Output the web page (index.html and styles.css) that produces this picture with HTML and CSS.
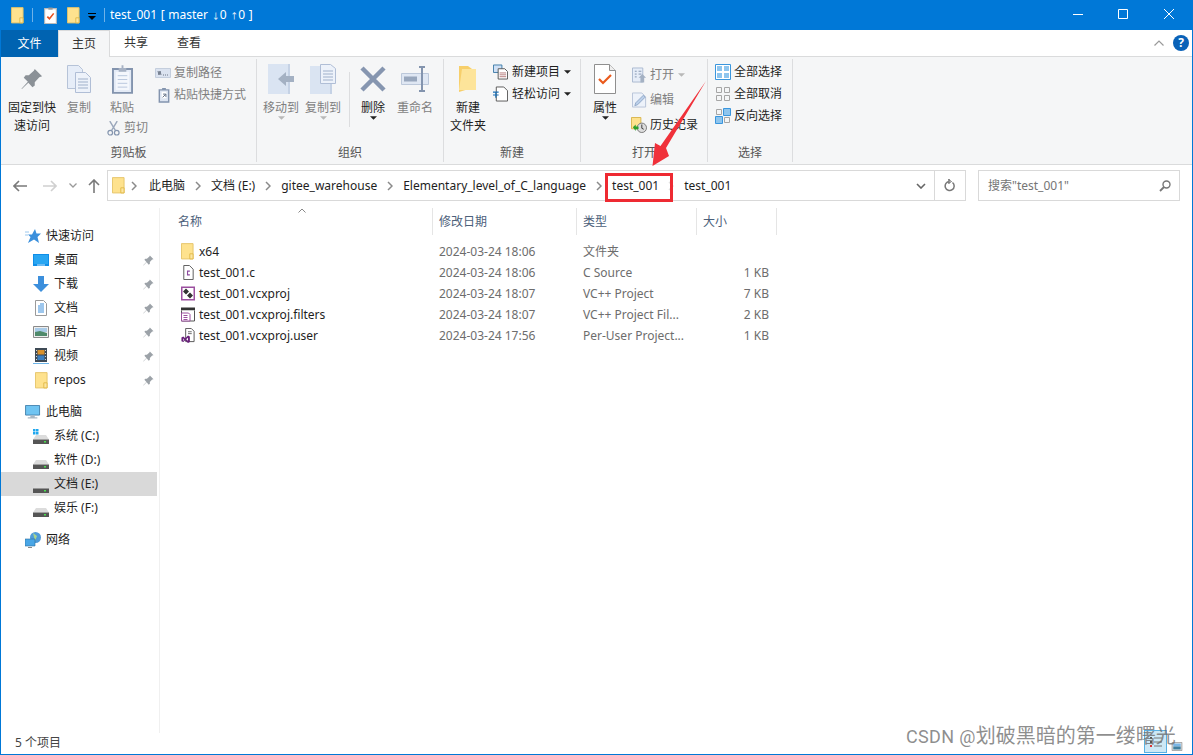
FILE: index.html
```html
<!DOCTYPE html>
<html lang="zh-CN">
<head>
<meta charset="utf-8">
<title>test_001</title>
<link rel="stylesheet" href="styles.css">
</head>
<body>
<svg class="defs" aria-hidden="true">
  <symbol id="folder" viewBox="0 0 14 18"><path d="M.5.5h12.500v16.500H.5z" fill="#fee28e" stroke="#e5c468"/><path d="M9.500 11.500h3.500v5.500H9.500z" fill="#fbe6a3" stroke="#e2b945"/></symbol>
  <symbol id="pin" viewBox="0 0 24 24"><path d="M15 1l8 8-3 1-5 5.500 0 3.500-2.500 2-4.500-5L1 23l-.5-.5 7-7.500L3 10.500l2-2.500h3.500L14 3z"/></symbol>
  <symbol id="chev" viewBox="0 0 6 10"><path d="M1 1l4 4-4 4" fill="none" stroke="currentColor" stroke-width="1.500"/></symbol>
  <symbol id="caret" viewBox="0 0 8 4"><path d="M0 0h8L4 4z"/></symbol>
  <symbol id="drive" viewBox="0 0 16 9"><path d="M3 0h10l3 4.500H0z" fill="#dcdcdc"/><path d="M0 4.500h16V9H0z" fill="#555"/><path d="M11 6h2v1.500h-2z" fill="#49e04e"/></symbol>
  <symbol id="mon" viewBox="0 0 18 16"><path d="M.5.5h16v11H.5z" fill="#6fc4f2" stroke="#3d7ba8"/><path d="M6 12h5v2h3v1.500H3V14h3z" fill="#a9b8c4"/></symbol>
</svg>

<div class="window">
  <header class="titlebar">
    <svg class="qa q-folder"><use href="#folder"/></svg>
    <span class="qa-sep"></span>
    <svg class="qa q-note" viewBox="0 0 12 16"><path d="M.5 1.500h11v14H.5z" fill="#fff" stroke="#bbb"/><path d="M4 .5h4v2H4z" fill="#999"/><path d="M3 9l2 2 4-5" fill="none" stroke="#e8501f" stroke-width="1.500"/></svg>
    <svg class="qa q-folder2"><use href="#folder"/></svg>
    <svg class="q-drop" viewBox="0 0 8 7"><path d="M0 0h8v1H0z" fill="#000"/><path d="M0 3h8L4 7z" fill="#000"/></svg>
    <span class="qa-sep q-sep2"></span>
    <span class="title-text">test_001 [ master <span class="arr">↓</span>0 <span class="arr">↑</span>0 ]</span>
    <div class="winbtns">
      <svg class="wb wb-min" viewBox="0 0 10 1"><path d="M0 .5h10" stroke="#fff"/></svg>
      <svg class="wb wb-max" viewBox="0 0 10 10"><path d="M.5.5h9v9h-9z" fill="none" stroke="#fff"/></svg>
      <svg class="wb wb-close" viewBox="0 0 10 10"><path d="M0 0l10 10M10 0L0 10" stroke="#fff"/></svg>
    </div>
  </header>

  <nav class="tabs">
    <span class="tab tab-file">文件</span>
    <span class="tab tab-home">主页</span>
    <span class="tab tab-share">共享</span>
    <span class="tab tab-view">查看</span>
    <svg class="tab-up" viewBox="0 0 10 6"><path d="M.5 5.500L5 1l4.500 4.500" fill="none" stroke="#9a9a9a" stroke-width="1.200"/></svg>
    <span class="help">?</span>
  </nav>

  <section class="ribbon">
    <div class="group g1">
      <div class="group-body">
        <div class="big b-pin">
          <span class="big-icon"><svg class="i-pin"><use href="#pin"/></svg></span>
          <span class="big-text dark">固定到快<br>速访问</span>
        </div>
        <div class="big b-copy">
          <span class="big-icon"><svg class="i-copy" viewBox="0 0 24 28"><path d="M.5.5h11l4 4v19H.5z" fill="#e6edf8" stroke="#b6c3d8"/><path d="M8.500 7.500h10l5 5v15h-15z" fill="#edf2fa" stroke="#b0bed6"/><path d="M11 14h10M11 17h10M11 20h10M11 23h10" stroke="#9fb0ca"/></svg></span>
          <span class="big-text">复制</span>
        </div>
        <div class="paste-col">
          <div class="big b-paste">
            <span class="big-icon"><svg class="i-paste" viewBox="0 0 22 30"><path d="M1 4h20v25H1z" fill="#e4ebf6" stroke="#8394ae" stroke-width="2"/><path d="M4 7h14v19H4z" fill="#f4f7fc"/><path d="M6 11h10M6 15h10M6 19h10M6 23h10" stroke="#b8c6dc"/><path d="M7 3h3V0h2v3h3v4H7z" fill="#a7b2c4"/></svg></span>
            <span class="big-text">粘贴</span>
          </div>
          <div class="small cut">
            <svg class="i-14" viewBox="0 0 14 16"><path d="M3 0l6 10M11 0L5 10" stroke="#9aa7bb" stroke-width="1.500"/><circle cx="3.500" cy="12.500" r="2.500" fill="none" stroke="#8394ae" stroke-width="1.300"/><circle cx="10.500" cy="12.500" r="2.500" fill="none" stroke="#8394ae" stroke-width="1.300"/></svg>
            <span>剪切</span>
          </div>
        </div>
        <div class="small-col c-clip">
          <div class="small"><svg class="i-path" viewBox="0 0 16 10"><path d="M.5.500h15v9H.5z" fill="#dbe3f0" stroke="#c4cedd"/><path d="M3 3l1 4 1-4 1 4M8 7h1M10 7h1M12 7h1" stroke="#6d7787" fill="none"/></svg><span>复制路径</span></div>
          <div class="small"><svg class="i-short" viewBox="0 0 12 16"><path d="M1 2h10v13H1z" fill="#dde5f1" stroke="#8394ae" stroke-width="1.500"/><path d="M3.500 4h5v7h-5z" fill="#fff"/><path d="M4.500 10l3-3M5 6.500h3v3" stroke="#5b6a80" fill="none"/><path d="M4 0h4v2H4z" fill="#8394ae"/></svg><span>粘贴快捷方式</span></div>
        </div>
      </div>
      <div class="group-label">剪贴板</div>
    </div>

    <div class="group g2">
      <div class="group-body">
        <div class="big b-36">
          <span class="big-icon"><svg class="i-move" viewBox="0 0 26 30"><path d="M0 0h22v30H0z" fill="#dae4f2"/><path d="M20 0h2v30h-2z" fill="#c5d2e5"/><path d="M10 15l8-7v4h8v6h-8v4z" fill="#a4b1c3"/></svg></span>
          <span class="big-text">移动到</span>
          <svg class="big-caret light"><use href="#caret"/></svg>
        </div>
        <div class="big b-36 m-6">
          <span class="big-icon"><svg class="i-move" viewBox="0 0 26 30"><path d="M0 2h22v28H0z" fill="#dae4f2"/><path d="M20 2h2v28h-2z" fill="#c5d2e5"/><path d="M10.500.5h10l5 4v15h-15z" fill="#edf2fa" stroke="#b0bed6"/><path d="M13 7h10M13 10h10M13 13h10M13 16h10" stroke="#9fb0ca"/></svg></span>
          <span class="big-text">复制到</span>
          <svg class="big-caret light"><use href="#caret"/></svg>
        </div>
        <span class="inner-sep"></span>
        <div class="big b-del">
          <span class="big-icon"><svg class="i-del" viewBox="0 0 26 26"><path d="M2 2l22 22M24 2L2 24" stroke="#8696b0" stroke-width="4.500"/></svg></span>
          <span class="big-text dark">删除</span>
          <svg class="big-caret"><use href="#caret"/></svg>
        </div>
        <div class="big b-ren">
          <span class="big-icon"><svg class="i-ren" viewBox="0 0 28 26"><path d="M.5 7.500h27v11H.5z" fill="#dfe7f3" stroke="#bcc8da"/><path d="M3 10.500h13v5H3z" fill="#98a7bd"/><path d="M18 1h6M18 25h6M21 1v24" stroke="#8394ae" stroke-width="2" fill="none"/></svg></span>
          <span class="big-text">重命名</span>
        </div>
      </div>
      <div class="group-label">组织</div>
    </div>

    <div class="group g3">
      <div class="group-body">
        <div class="big b-new">
          <span class="big-icon"><svg class="i-newf" viewBox="0 0 20 28"><path d="M1 1h9l4 3v19L1 27z" fill="#f7cf6b"/><path d="M4 4h14v21H1z" fill="#fde49a"/></svg></span>
          <span class="big-text dark">新建<br>文件夹</span>
        </div>
        <div class="small-col c-new">
          <div class="small dark"><svg class="i-15" viewBox="0 0 16 16"><path d="M.5.500h9v8h-9z" fill="#cfe0f5" stroke="#3d7ba8"/><path d="M5.500 4.500h7l3 3v8h-10z" fill="#fff" stroke="#555"/><path d="M7 9h7M7 11h7M7 13h7" stroke="#b57a7a"/></svg><span>新建项目</span><svg class="sm-caret"><use href="#caret"/></svg></div>
          <div class="small dark"><svg class="i-15" viewBox="0 0 16 16"><path d="M3.500.5h8l4 4v11h-12z" fill="#fff" stroke="#555"/><path d="M0 6h6M0 9h6M3 6v6" stroke="#1a6fb5" stroke-width="1.200" fill="none"/></svg><span>轻松访问</span><svg class="sm-caret"><use href="#caret"/></svg></div>
        </div>
      </div>
      <div class="group-label">新建</div>
    </div>

    <div class="group g4">
      <div class="group-body">
        <div class="big b-prop">
          <span class="big-icon"><svg class="i-prop" viewBox="0 0 22 30"><path d="M.5.5h15l6 6v23H.5z" fill="#fff" stroke="#8f8f8f"/><path d="M15.500.5v6h6" fill="#eee" stroke="#8f8f8f"/><path d="M5 15l4 4 8-8" fill="none" stroke="#ea5a1c" stroke-width="2.200"/></svg></span>
          <span class="big-text dark">属性</span>
          <svg class="big-caret"><use href="#caret"/></svg>
        </div>
        <div class="small-col c-open">
          <div class="small"><svg class="i-15" viewBox="0 0 16 16"><path d="M.5.500h11v15H.5z" fill="#e6edf8" stroke="#a9b8cf"/><path d="M3 4h2M7 4h3M3 7h2M7 7h3M3 10h2" stroke="#8394ae"/><path d="M11 7l4 4h-2v5h-4v-5H7z" fill="#a4b1c3"/></svg><span>打开</span><svg class="sm-caret light"><use href="#caret"/></svg></div>
          <div class="small"><svg class="i-15" viewBox="0 0 16 16"><path d="M.5.500h10l4 4v11H.5z" fill="#edf2fa" stroke="#b6c3d8"/><path d="M3 14l1-3 8-8 2 2-8 8z" fill="#bcd0ea" stroke="#8fa6c6"/></svg><span>编辑</span></div>
          <div class="small dark hist"><svg class="i-16" viewBox="0 0 17 17"><path d="M.5.500h10v12H.5z" fill="#fee28e" stroke="#d7b34b"/><circle cx="11.500" cy="11.500" r="5" fill="#ddd" stroke="#777"/><path d="M11.500 8v4l2 1" stroke="#333" fill="none"/><path d="M2 11l3-3v2h3v3H5v2z" fill="#2ca02c"/></svg><span>历史记录</span></div>
        </div>
      </div>
      <div class="group-label">打开</div>
    </div>

    <div class="group g5">
      <div class="group-body">
        <div class="small-col c-sel">
          <div class="small dark"><svg class="i-16" viewBox="0 0 16 16"><path d="M.5.500h15v15H.5z" fill="#fff" stroke="#3a96dd"/><path d="M2 2h5v5H2zM9 2h5v5H9zM2 9h5v5H2zM9 9h5v5H9z" fill="#8ec5ee"/></svg><span>全部选择</span></div>
          <div class="small dark"><svg class="i-16" viewBox="0 0 16 16"><path d="M1.500 1.500h5v5h-5zM9.500 1.500h5v5h-5zM1.500 9.500h5v5h-5zM9.500 9.500h5v5h-5z" fill="none" stroke="#a6a6a6"/></svg><span>全部取消</span></div>
          <div class="small dark"><svg class="i-16" viewBox="0 0 16 16"><path d="M1.500 1.500h5v5h-5z" fill="none" stroke="#a6a6a6"/><path d="M8.500.5h7v7h-7z" fill="#8ec5ee" stroke="#3a96dd"/><path d="M.5 8.500h7v7h-7z" fill="#8ec5ee" stroke="#3a96dd"/><path d="M9.500 9.500h5v5h-5z" fill="none" stroke="#a6a6a6"/></svg><span>反向选择</span></div>
        </div>
      </div>
      <div class="group-label">选择</div>
    </div>
  </section>

  <section class="addrrow">
    <svg class="nav-back" viewBox="0 0 14 12"><path d="M6 1L1 6l5 5M1 6h13" fill="none" stroke="#7a7a7a" stroke-width="1.600"/></svg>
    <svg class="nav-fwd" viewBox="0 0 14 12"><path d="M8 1l5 5-5 5M13 6H0" fill="none" stroke="#d0d0d0" stroke-width="1.600"/></svg>
    <svg class="nav-down" viewBox="0 0 8 5"><path d="M.5.500L4 4 7.500.5" fill="none" stroke="#9a9a9a" stroke-width="1.300"/></svg>
    <svg class="nav-up" viewBox="0 0 12 14"><path d="M1 6l5-5 5 5M6 1v13" fill="none" stroke="#7a7a7a" stroke-width="1.600"/></svg>
    <div class="addr">
      <svg class="addr-folder"><use href="#folder"/></svg>
      <svg class="crumb-chev first"><use href="#chev"/></svg>
      <span>此电脑</span>
      <svg class="crumb-chev"><use href="#chev"/></svg>
      <span>文档 (E:)</span>
      <svg class="crumb-chev"><use href="#chev"/></svg>
      <span>gitee_warehouse</span>
      <svg class="crumb-chev"><use href="#chev"/></svg>
      <span>Elementary_level_of_C_language</span>
      <svg class="crumb-chev"><use href="#chev"/></svg>
      <span>test_001</span>
      <svg class="crumb-chev faint"><use href="#chev"/></svg>
      <span>test_001</span>
      <svg class="addr-drop" viewBox="0 0 10 6"><path d="M1 1l4 4 4-4" fill="none" stroke="#666" stroke-width="1.600"/></svg>
    </div>
    <div class="refresh"><svg viewBox="0 0 12 13"><path d="M8.500 3.500a4.500 4.500 0 1 1-3-1M5 0v4.500" fill="none" stroke="#777" stroke-width="1.500"/><path d="M4.500.5l3 2-3 2" fill="none" stroke="#777"/></svg></div>
    <div class="search">
      <span>搜索"test_001"</span>
      <svg viewBox="0 0 12 12"><circle cx="7.500" cy="4.500" r="3.500" fill="none" stroke="#777" stroke-width="1.400"/><path d="M5 7l-4 4" stroke="#777" stroke-width="1.800"/></svg>
    </div>
  </section>

  <main class="main">
    <aside class="navpane">
      <div class="nrow head"><svg class="ni" viewBox="0 0 16 16"><path d="M10 1l1.500 4.500H16L12.500 9l1.500 6-5-3.500L3 15l2.500-6L3 6.500h4z" fill="#3a8fdc"/><path d="M0 4h4M0 7h3" stroke="#9cc8ee"/></svg><span>快速访问</span></div>
      <div class="nrow"><svg class="ni" viewBox="0 0 16 14"><path d="M0 1h16v12H0z" fill="#0f8ee8"/><path d="M1 2h14v9H1z" fill="#29a6f2"/><path d="M4 12h8" stroke="#cfe9fb"/></svg><span>桌面</span><svg class="npin"><use href="#pin"/></svg></div>
      <div class="nrow"><svg class="ni" viewBox="0 0 16 16"><path d="M5 0h6v8h5l-8 8-8-8h5z" fill="#3c8fdc"/></svg><span>下载</span><svg class="npin"><use href="#pin"/></svg></div>
      <div class="nrow"><svg class="ni" viewBox="0 0 16 16"><path d="M2.500.5h8l3 3v12h-11z" fill="#fff" stroke="#9a9a9a"/><path d="M7 4h4M5 6h6M5 8h6M5 10h6M5 12h6" stroke="#3c8fdc"/></svg><span>文档</span><svg class="npin"><use href="#pin"/></svg></div>
      <div class="nrow"><svg class="ni" viewBox="0 0 16 14"><path d="M.5 1.500h15v11H.5z" fill="#eee" stroke="#8a8a8a"/><path d="M2 3h12v4H2z" fill="#a9cbe8"/><path d="M2 7l5-1 7 2v3H2z" fill="#4f8a6b"/></svg><span>图片</span><svg class="npin"><use href="#pin"/></svg></div>
      <div class="nrow"><svg class="ni" viewBox="0 0 16 16"><path d="M2 0h12v14H2z" fill="#3e4a55"/><path d="M4.500 2h7v4.500h-7z" fill="#d9912c"/><path d="M4.500 7.500h7V12h-7z" fill="#3c7fc0"/><path d="M3 2h1v1H3zM3 5h1v1H3zM3 8h1v1H3zM3 11h1v1H3zM12 2h1v1h-1zM12 5h1v1h-1zM12 8h1v1h-1zM12 11h1v1h-1z" fill="#cfd6dc"/><path d="M0 15h16v1H0z" fill="#6cb4e8"/></svg><span>视频</span><svg class="npin"><use href="#pin"/></svg></div>
      <div class="nrow"><svg class="ni folder-i"><use href="#folder"/></svg><span>repos</span><svg class="npin"><use href="#pin"/></svg></div>
      <div class="nrow head gap"><svg class="ni" viewBox="0 0 16 14"><use href="#mon"/></svg><span>此电脑</span></div>
      <div class="nrow"><svg class="ni" viewBox="0 0 16 16"><path d="M0 1h2.500v2.500H0zM3 1h2.500v2.500H3zM0 4h2.500v2.500H0zM3 4h2.500v2.500H3z" fill="#1fa7ee"/><use href="#drive" y="7" width="16" height="9"/></svg><span>系统 (C:)</span></div>
      <div class="nrow"><svg class="ni drive-i"><use href="#drive"/></svg><span>软件 (D:)</span></div>
      <div class="nrow selected"><svg class="ni drive-i"><use href="#drive"/></svg><span>文档 (E:)</span></div>
      <div class="nrow"><svg class="ni drive-i"><use href="#drive"/></svg><span>娱乐 (F:)</span></div>
      <div class="nrow head gap"><svg class="ni" viewBox="0 0 16 16"><circle cx="10.500" cy="5.500" r="5.500" fill="#4f9bd9"/><path d="M8 1l4 3-2 5" fill="#a8d48c"/><path d="M0 7h10v7H0z" fill="#49a6e6" stroke="#2d6f9f" stroke-width=".6"/><path d="M3 15h4v1H3z" fill="#888"/></svg><span>网络</span></div>
    </aside>

    <div class="filepane">
      <div class="fhead">
        <div class="hcell hname">名称<svg class="sort" viewBox="0 0 8 5"><path d="M.5 4.500L4 1l3.500 3.500" fill="none" stroke="#888"/></svg></div>
        <div class="hcell">修改日期</div>
        <div class="hcell">类型</div>
        <div class="hcell">大小</div>
      </div>
      <div class="frow">
        <div class="fname"><svg class="fi fi-folder"><use href="#folder"/></svg>x64</div><div class="fmeta">2024-03-24 18:06</div><div class="fmeta">文件夹</div><div class="fmeta fsize"></div>
      </div>
      <div class="frow">
        <div class="fname"><svg class="fi" viewBox="0 0 14 16"><path d="M2.500.5h6l4 4v11h-10z" fill="#fff" stroke="#555"/><path d="M9 6.500H6.500v4H9" fill="none" stroke="#8c4a9e" stroke-width="1.200"/></svg>test_001.c</div><div class="fmeta">2024-03-24 18:06</div><div class="fmeta">C Source</div><div class="fmeta fsize">1 KB</div>
      </div>
      <div class="frow">
        <div class="fname"><svg class="fi" viewBox="0 0 14 14"><path d="M.75.750h12.500v12.500H.75z" fill="#fff" stroke="#9b4f9f" stroke-width="1.500"/><path d="M5 2l3 3-3 3-3-3zM9 6l3 3-3 3-3-3z" fill="#333"/></svg>test_001.vcxproj</div><div class="fmeta">2024-03-24 18:07</div><div class="fmeta">VC++ Project</div><div class="fmeta fsize">7 KB</div>
      </div>
      <div class="frow">
        <div class="fname"><svg class="fi" viewBox="0 0 14 14"><path d="M0 0h14v3H0z" fill="#333"/><path d="M.5 3v10.500h13V3" fill="#fff" stroke="#555"/><path d="M.5 5.500h7l1.500 1.500v6.500H.5z" fill="#fff" stroke="#9b4f9f"/><path d="M2.500 8h4M2.500 10h4M2.500 12h4" stroke="#9b4f9f"/></svg>test_001.vcxproj.filters</div><div class="fmeta">2024-03-24 18:07</div><div class="fmeta">VC++ Project Fil...</div><div class="fmeta fsize">2 KB</div>
      </div>
      <div class="frow">
        <div class="fname"><svg class="fi" viewBox="0 0 14 16"><path d="M4.500.5h6l3 3v11h-9z" fill="#fff" stroke="#555"/><path d="M7 4h4M7 6h4" stroke="#666"/><path d="M0 10l2-1 2 2 3-3 2 1v6l-2 1-3-3-2 2-2-1zM2 11v3l1-1.500zM7 10.500l-2 1.500 2 1.500z" fill="#68217a" fill-rule="evenodd"/></svg>test_001.vcxproj.user</div><div class="fmeta">2024-03-24 17:56</div><div class="fmeta">Per-User Project...</div><div class="fmeta fsize">1 KB</div>
      </div>
    </div>
  </main>

  <footer class="status">
    <span class="status-text">5 个项目</span>
    <div class="views">
      <span class="view-detail"><svg viewBox="0 0 14 14"><path d="M1 2h2v2H1zM1 6h2v2H1z" fill="#555"/><path d="M5 3h8M5 7h8M5 11h8" stroke="#777"/><path d="M1 10h2v2H1z" fill="#d33"/></svg></span>
      <span class="view-large"><svg viewBox="0 0 14 12"><path d="M.5.500h13v11H.5z" fill="#eee" stroke="#8a8a8a"/><path d="M2 2h10v4H2z" fill="#7ab6e6"/><path d="M2 6h10v4H2z" fill="#3f7f9f"/></svg></span>
    </div>
  </footer>

  <div class="redbox"></div>
  <svg class="arrow" viewBox="0 0 1193 755"><path d="M706 81L666 148l3 8-16.500 10L655 143l5.500 3z" fill="#f0313a"/></svg>
  <div class="watermark"><span class="wm-l">CSDN @</span>划破黑暗的第一缕曙光</div>
</div>
</body>
</html>
```

FILE: styles.css
```css
* { box-sizing: border-box; }
html, body { margin: 0; padding: 0; }
body {
  width: 1193px;
  height: 755px;
  overflow: hidden;
  font: 12px/18px "Noto Sans", "Noto Sans CJK SC", sans-serif;
  color: #1e1e1e;
  background: #fff;
}
svg { display: block; flex: none; }
.defs { width: 0; height: 0; position: absolute; }

.window {
  position: relative;
  width: 1193px;
  height: 755px;
  border: solid #0078d7;
  border-width: 0 1px 1px;
  display: flex;
  flex-direction: column;
}

/* title bar */
.titlebar {
  height: 30px;
  background: #0078d7;
  color: #fff;
  display: flex;
  align-items: center;
  margin: 0 -1px;
  flex: none;
}
.qa { width: 13px; height: 17px; }
.q-folder { margin-left: 11px; }
.qa-sep { width: 1px; height: 14px; background: #6fb2e8; margin-left: 8px; }
.q-note { margin-left: 11px; }
.q-folder2 { margin-left: 10px; }
.q-drop { width: 8px; height: 7px; margin-left: 8px; margin-top: 2px; }
.q-sep2 { margin-left: 8px; }
.title-text { margin-left: 5px; white-space: nowrap; word-spacing: .5px; }
.arr { font-size: 8px; }
.winbtns { margin-left: auto; display: flex; align-items: center; margin-top: -2px; }
.wb { width: 10px; height: 10px; }
.wb-min { margin-right: 35px; height: 1px; }
.wb-max { margin-right: 36px; }
.wb-close { margin-right: 19px; }

/* tabs */
.tabs {
  height: 27px;
  background: #fff;
  border-bottom: 1px solid #dadbdc;
  display: flex;
  align-items: stretch;
  flex: none;
  position: relative;
}
.tab { display: flex; align-items: center; justify-content: center; color: #333; }
.tab-file { width: 57px; background: #0063b1; color: #fff; margin-bottom: -1px; }
.tab-home {
  width: 52px;
  background: #f5f6f7;
  border: solid #dadbdc;
  border-width: 1px 1px 0;
  margin-bottom: -1px;
  z-index: 1;
}
.tab-share { margin-left: 14px; width: 24px; }
.tab-view { margin-left: 29px; width: 24px; }
.tab-up { width: 10px; height: 6px; margin: 10px 0 0 auto; }
.help {
  width: 16px;
  height: 16px;
  margin: 5px 3px 0 9px;
  border-radius: 50%;
  background: #0a62b8;
  color: #fff;
  font-weight: 700;
  font-size: 12px;
  line-height: 16px;
  text-align: center;
}

/* ribbon */
.ribbon {
  height: 108px;
  background: #f5f6f7;
  border-bottom: 1px solid #dadbdc;
  display: flex;
  padding-top: 2px;
  flex: none;
}
.group {
  height: 103px;
  border-right: 1px solid #dcdddf;
  display: flex;
  flex-direction: column;
  flex: none;
}
.g1 { width: 256px; }
.g2 { width: 187px; }
.g3 { width: 137px; }
.g4 { width: 127px; }
.g5 { width: 85px; }
.group-body { display: flex; flex: 1; min-height: 0; align-items: flex-start; color: #7f7f7f; }
.group-label { height: 18px; text-align: center; color: #555; flex: none; }
.dark { color: #1e1e1e; }

.g1 .group-body { padding-left: 6px; }
.g2 .group-body { padding-left: 6px; }
.g3 .group-body { padding-left: 5px; }
.g4 .group-body { padding-left: 6px; }
.g5 .group-body { padding-left: 7px; }

.big {
  display: flex;
  flex-direction: column;
  align-items: center;
  text-align: center;
  flex: none;
}
.big-icon { height: 40px; display: flex; align-items: center; justify-content: center; }
.big-text { white-space: nowrap; }
.b-pin { width: 50px; }
.b-copy { width: 44px; }
.b-paste { width: 40px; }
.paste-col { width: 40px; margin-left: 1px; flex: none; }
.b-36 { width: 36px; }
.m-6 { margin-left: 6px; }
.b-del { width: 46px; }
.b-ren { width: 38px; }
.b-new { width: 38px; }
.b-prop { width: 36px; }
.big-caret { width: 7px; height: 4px; margin-top: -1px; fill: #222; }
.big-caret.light { fill: #b8b8b8; margin-top: -1px; }
.inner-sep { width: 1px; height: 55px; background: #dcdddf; margin: 13px 0 0 8px; flex: none; }

.i-pin { width: 22px; height: 22px; fill: #8b9197; }
.i-copy { width: 24px; height: 28px; }
.i-paste { width: 21px; height: 29px; }
.i-move { width: 26px; height: 30px; }
.i-del { width: 26px; height: 26px; }
.i-ren { width: 28px; height: 26px; }
.i-newf { width: 20px; height: 28px; }
.i-prop { width: 22px; height: 30px; }
.i-14 { width: 13px; height: 15px; }
.i-15 { width: 15px; height: 16px; }
.i-16 { width: 16px; height: 16px; }
.i-path { width: 16px; height: 10px; }
.i-short { width: 12px; height: 15px; }

.small-col { display: flex; flex-direction: column; flex: none; }
.small { height: 22px; display: flex; align-items: center; white-space: nowrap; }
.c-clip { margin: 3px 0 0 13px; }
.c-clip .small .i-path { margin-right: 3px; }
.c-clip .small .i-short { margin: 0 4px 0 3px; }
.cut { height: 22px; margin-left: 5px; color: #7f7f7f; }
.cut svg { margin-right: 4px; }
.c-new { margin: 2px 0 0 6px; }
.c-new .small svg:first-child { margin-right: 4px; }
.sm-caret { width: 7px; height: 4px; margin-left: 4px; fill: #222; }
.sm-caret.light { fill: #b8b8b8; margin-left: 4px; }
.c-open { margin: 3px 0 0 8px; }
.c-open .small { height: 25px; }
.c-open .small svg:first-child { margin: 0 3px 0 1px; }
.c-open .hist svg:first-child { margin: 0 3px 0 0; }
.c-sel { margin-top: 2px; }
.c-sel .small svg:first-child { margin-right: 3px; }

/* address row */
.addrrow {
  height: 43px;
  display: flex;
  align-items: flex-start;
  padding-top: 5px;
  flex: none;
  position: relative;
}
.nav-back { width: 14px; height: 12px; margin: 10px 0 0 12px; }
.nav-fwd { width: 14px; height: 12px; margin: 10px 0 0 16px; }
.nav-down { width: 8px; height: 5px; margin: 13px 0 0 12px; }
.nav-up { width: 12px; height: 14px; margin: 9px 0 0 11px; }
.addr {
  width: 828px;
  height: 31px;
  margin-left: 7px;
  border: 1px solid #d9d9d9;
  display: flex;
  align-items: center;
  padding-left: 4px;
  white-space: nowrap;
  color: #1e1e1e;
}
.addr-folder { width: 13px; height: 17px; }
.crumb-chev { width: 6px; height: 10px; margin: 0 10px 0 10px; color: #8a8a8a; }
.crumb-chev.first { margin: 0 12px 0 6px; }
.crumb-chev.faint { color: #e2e2e2; margin-left: 9px; }
.addr-drop { width: 10px; height: 6px; margin-left: auto; margin-right: 8px; }
.refresh {
  width: 32px;
  height: 31px;
  margin-left: -1px;
  border: 1px solid #d9d9d9;
  display: flex;
  align-items: center;
  justify-content: center;
}
.refresh svg { width: 12px; height: 13px; }
.search {
  width: 202px;
  height: 31px;
  margin-left: 12px;
  border: 1px solid #d9d9d9;
  display: flex;
  align-items: center;
  justify-content: space-between;
  padding: 0 8px 0 9px;
  color: #757575;
}
.search svg { width: 12px; height: 12px; }

/* main */
.main { flex: 1; display: flex; min-height: 0; }
.navpane {
  width: 159px;
  flex: none;
  border-right: 1px solid #f0f0f0;
  padding-top: 16px;
}
.nrow {
  height: 24px;
  width: 156px;
  display: flex;
  align-items: center;
  padding-left: 32px;
  color: #1e1e1e;
  position: relative;
}
.nrow.head { padding-left: 24px; }
.nrow.gap { margin-top: 8px; }
.nrow.selected { background: #d9d9d9; }
.ni { width: 16px; height: 16px; margin-right: 5px; }
.folder-i { width: 13px; height: 17px; margin: 0 6px 0 2px; }
.drive-i { width: 16px; height: 9px; margin-top: 8px; }
.npin { width: 11px; height: 11px; fill: #9ca2a8; margin-left: auto; margin-right: 3px; }

.filepane { flex: 1; min-width: 0; }
.fhead, .frow {
  display: grid;
  grid-template-columns: 273px 144px 120px 80px;
}
.fhead { height: 27px; margin-bottom: 6px; }
.hcell {
  border-right: 1px solid #e5e5e5;
  padding-left: 6px;
  display: flex;
  align-items: center;
  color: #4c607a;
  position: relative;
}
.hname { padding-left: 18px; }
.sort { width: 8px; height: 5px; position: absolute; left: 138px; top: 0; }
.frow { height: 21px; align-items: center; }
.fname { display: flex; align-items: center; padding-left: 21px; white-space: nowrap; }
.fi { width: 14px; height: 15px; margin-right: 4px; }
.fi-folder { width: 13px; height: 17px; margin-right: 5px; }
.fmeta { padding-left: 6px; color: #6d6d6d; white-space: nowrap; }
.fsize { text-align: right; padding: 0 8px 0 0; }

/* status */
.status {
  height: 21px;
  display: flex;
  align-items: center;
  padding-left: 14px;
  color: #444;
  flex: none;
}
.status-text { margin-bottom: 2px; }
.views { margin-left: auto; display: flex; align-items: center; margin-right: 8px; }
.view-detail {
  width: 23px;
  height: 23px;
  margin-top: -4px;
  background: #cce8f6;
  border: 1px solid #5ab0e3;
  display: flex;
  align-items: center;
  justify-content: center;
}
.view-detail svg { width: 14px; height: 14px; }
.view-large { width: 14px; margin: 5px 0 0 3px; }
.view-large svg { width: 14px; height: 9px; }

/* overlays */
.redbox {
  position: absolute;
  left: 604px;
  top: 173px;
  width: 68px;
  height: 29px;
  border: 3px solid #ee2a32;
}
.arrow { position: absolute; left: -1px; top: 0; width: 1193px; height: 755px; pointer-events: none; }
.watermark {
  position: absolute;
  left: 905px;
  top: 723px;
  font-size: 20px;
  line-height: 26px;
  white-space: nowrap;
  color: rgba(105, 105, 105, 0.75);
}
.wm-l { font-family: Roboto, sans-serif; font-size: 18px; letter-spacing: .35px; }
```
